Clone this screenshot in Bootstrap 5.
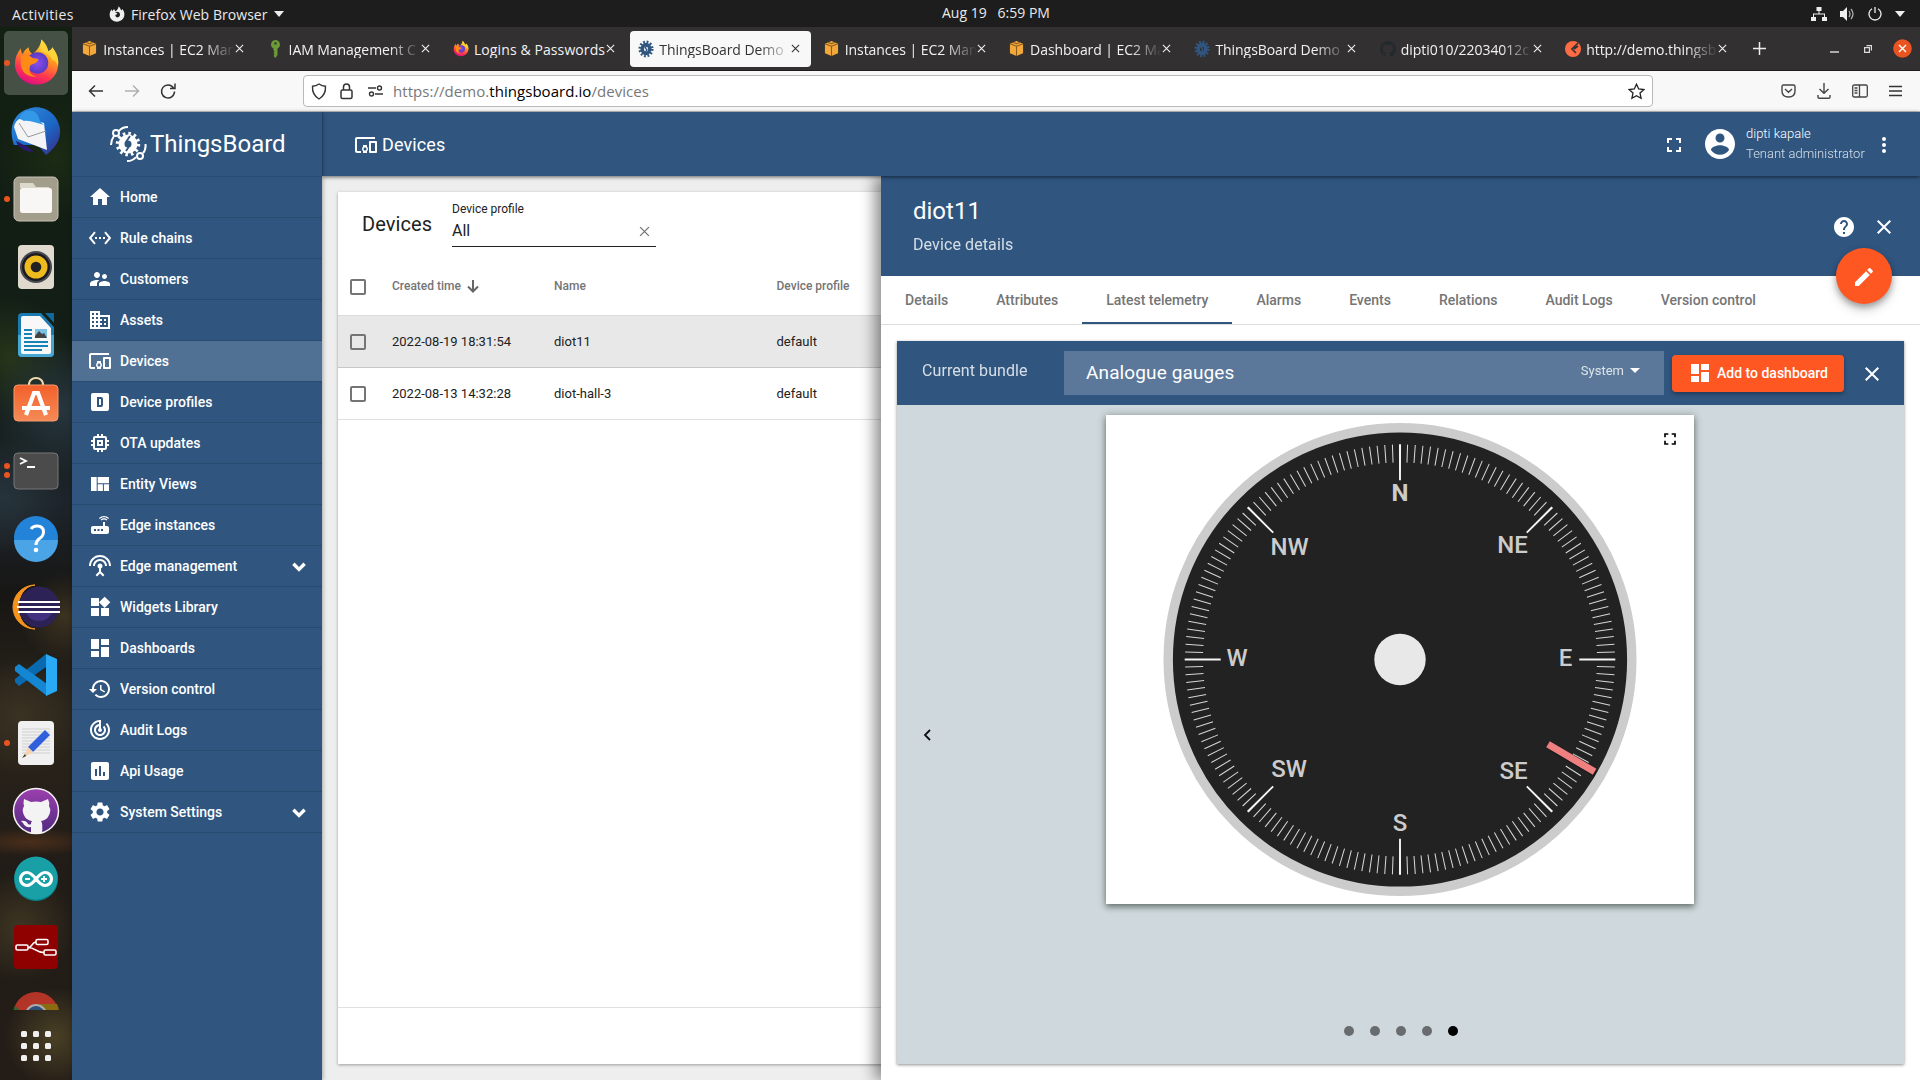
<!DOCTYPE html>
<html lang="en">
<head>
<meta charset="utf-8">
<title>ThingsBoard Demo | Devices</title>
<link rel="stylesheet" href="https://cdn.jsdelivr.net/npm/bootstrap@5.3.0/dist/css/bootstrap.min.css">
<style>
body{width:1920px;height:1080px;overflow:hidden;font-family:Roboto,"Liberation Sans",sans-serif;color:#212121;line-height:1.2}
svg{display:block;flex:none}
.ic{width:24px;height:24px;fill:currentColor}
.ubu{font-family:"Open Sans","Noto Sans",sans-serif;font-size:14px}
.topbar{height:27px;background:#1d1d1d;color:#e9e9e9;padding:0 15px 0 12px}
.topbar>div{flex:1 1 0}
.dock{width:72px;padding-top:2px;background:
 radial-gradient(circle at 60px 380px,#2c3c49cc,transparent 70px),
 radial-gradient(circle at 10px 330px,#26351a,transparent 60px),
 radial-gradient(circle at 55px 130px,#1b2b14,transparent 60px),
 radial-gradient(circle at 5px 470px,#26333b,transparent 60px),
 radial-gradient(circle at 65px 590px,#3c3220,transparent 45px),
 radial-gradient(circle at 20px 690px,#3a3222,transparent 60px),
 radial-gradient(ellipse 70px 14px at 30px 815px,#4a2e1a,transparent),
 radial-gradient(circle at 20px 900px,#3e3622,transparent 55px),
 radial-gradient(circle at 55px 1010px,#4a4025,transparent 50px),
 linear-gradient(#122012,#131d17 35%,#1d242a 45%,#171614 54%,#2a241b 65%,#211c17 80%,#241d17)}
.dock-list{height:981px;overflow:hidden}
.tabstrip{height:44px;background:#333031;border-bottom:1px solid #1e1c1d;color:#f2f2f2}
.btab{width:181px;height:36px;margin:0 2.2px;padding:0 11px 0 8px;border-radius:4px}
.btab.on{background:#f8f8f8;color:#333}
.btab span{flex:1;overflow:hidden;white-space:nowrap;padding-top:3px;letter-spacing:-.06px;-webkit-mask:linear-gradient(90deg,#000 76%,transparent)}
.btab span.full{-webkit-mask:none;letter-spacing:.1px}
.urlrow{height:41px;background:#f8f8f8;border-bottom:1px solid #c4c4c4;color:#444}
.urlbox{width:1350px;height:32px;background:#fff;border:1px solid #b9b9b9;border-radius:4px;color:#777;margin-left:125px;padding:0 7px}
.urltext{margin-left:10px;font-size:15px;letter-spacing:.05px}
.blue{background:#305680}
.side{width:250px;color:#fff;z-index:4;box-shadow:1px 0 4px rgba(0,0,0,.3)}
.brand{height:65px;border-bottom:1px solid #2a4c72;padding:0 0 0 37px;font-size:24px}
.side a{height:41px;border-bottom:1px solid #294b70;padding:0 14px 0 16px;gap:8px;color:#fff;text-decoration:none;font-size:14px;font-weight:500}
.side a.on{background:#507194}
.apphead{height:64px;color:#fff;padding:2px 24px 0 31px;box-shadow:0 1px 4px rgba(0,0,0,.6);z-index:3;border-left:1px solid #2b4e75}
.content{width:559px;background:#eee;padding:16px;overflow:hidden}
.listcard{width:900px;height:872px;background:#fff;box-shadow:0 1px 3px rgba(0,0,0,.35)}
.field{width:204px;height:55px;border-bottom:1px solid #212121;margin-left:20px}
.cb{width:16px;height:16px;border:2px solid #757575;border-radius:2px;margin:0 26px 0 12px}
.trow{height:52px;border-bottom:1px solid #e0e0e0;font-size:13px}
.trow .c1{width:162px}.trow .c2{width:222.5px}
.thead-row{height:58px;border-bottom-color:#dcdcdc;font-size:12px;font-weight:500;color:#757575}
.drawer{width:1039px;background:#fff;box-shadow:-6px 0 14px rgba(0,0,0,.45);z-index:2}
.dhead{height:100px;color:#fff;padding:0 24px 0 32px}
.fab{right:28px;top:72px;width:56px;height:56px;border-radius:50%;background:#ff5722;box-shadow:0 3px 6px rgba(0,0,0,.3),0 6px 12px rgba(0,0,0,.16);z-index:2}
.dtabs{height:49px;border-bottom:1px solid #ddd;font-size:14px;font-weight:500;color:#757575}
.dtabs div{padding:16px 24px 0;height:48px}
.dtabs .on{border-bottom:2px solid #305680}
.wpanel{margin:16px;height:723px;background:#cfd8dc;box-shadow:0 1px 3px rgba(0,0,0,.45)}
.whead{height:64px;color:#fff;padding-left:25px}
.wsel{width:600px;height:44px;background:#5b789a;padding:0 24px 0 22px;margin-left:37px}
.addbtn{width:172px;height:37px;background:#ff5722;border-radius:4px;margin-left:8px;padding-left:16px;gap:5px;font-size:14px;font-weight:500;box-shadow:0 2px 4px rgba(0,0,0,.35)}
.wcard{width:588px;height:489px;background:#fff;box-shadow:0 3px 6px rgba(40,55,50,.55),0 0 8px rgba(60,80,70,.3);margin:10px 0 0 209px}
.wexp{right:14px;top:14px}
.dotrow i{width:10px;height:10px;border-radius:50%;background:#686c6e}
.soft{opacity:.8}
</style>
<script src="https://cdn.jsdelivr.net/npm/bootstrap@5.3.0/dist/js/bootstrap.bundle.min.js"></script>
</head>
<body class="d-flex flex-column">
<svg width="0" height="0" class="position-absolute">
<defs>
<linearGradient id="gFox" x1=".8" y1="0" x2=".4" y2="1"><stop offset="0" stop-color="#fff44f"/><stop offset=".4" stop-color="#ff9a1f"/><stop offset=".75" stop-color="#ff3750"/><stop offset="1" stop-color="#e0107f"/></linearGradient>
<radialGradient id="gGlobe"><stop offset="0" stop-color="#8a4df0"/><stop offset="1" stop-color="#5a3ac2"/></radialGradient>
<linearGradient id="gBird" x1="0" y1="0" x2="1" y2="1"><stop offset="0" stop-color="#2f8fe0"/><stop offset=".6" stop-color="#1c65c4"/><stop offset="1" stop-color="#3b2a86"/></linearGradient>
<linearGradient id="gOr" x1="0" y1="0" x2="0" y2="1"><stop offset="0" stop-color="#f3602b"/><stop offset="1" stop-color="#f58a56"/></linearGradient>
<linearGradient id="gPur" x1="0" y1="0" x2="0" y2="1"><stop offset="0" stop-color="#9d3fae"/><stop offset="1" stop-color="#4f2a80"/></linearGradient>
<symbol id="home" viewBox="0 0 24 24"><path d="M10 20v-6h4v6h5v-8h3L12 3 2 12h3v8z"/></symbol>
<symbol id="chains" viewBox="0 0 24 24"><path d="M7.77 6.76L6.23 5.48.82 12l5.41 6.52 1.54-1.28L3.42 12l4.35-5.24zM7 13h2v-2H7v2zm10-2h-2v2h2v-2zm-6 2h2v-2h-2v2zm6.77-7.52l-1.54 1.28L20.58 12l-4.35 5.24 1.54 1.28L23.18 12l-5.41-6.52z"/></symbol>
<symbol id="people" viewBox="0 0 24 24"><path d="M16.5 12c1.38 0 2.49-1.12 2.49-2.5S17.88 7 16.5 7C15.12 7 14 8.12 14 9.5s1.12 2.5 2.5 2.5zM9 11c1.66 0 2.99-1.34 2.99-3S10.66 5 9 5C7.34 5 6 6.34 6 8s1.34 3 3 3zm7.5 3c-1.83 0-5.5.92-5.5 2.75V19h11v-2.25c0-1.83-3.67-2.75-5.5-2.75zM9 13c-2.33 0-7 1.17-7 3.5V19h7v-2.25c0-.85.33-2.34 2.37-3.47C10.5 13.1 9.66 13 9 13z"/></symbol>
<symbol id="domain" viewBox="0 0 24 24"><path d="M12 7V3H2v18h20V7H12zM6 19H4v-2h2v2zm0-4H4v-2h2v2zm0-4H4V9h2v2zm0-4H4V5h2v2zm4 12H8v-2h2v2zm0-4H8v-2h2v2zm0-4H8V9h2v2zm0-4H8V5h2v2zm10 12h-8v-2h2v-2h-2v-2h2v-2h-2V9h8v10zm-2-8h-2v2h2v-2zm0 4h-2v2h2v-2z"/></symbol>
<symbol id="devices" viewBox="0 0 24 24"><path d="M3 6h18V4H3c-1.1 0-2 .9-2 2v12c0 1.1.9 2 2 2h4v-2H3V6zm10 6H9v1.78c-.61.55-1 1.33-1 2.22s.39 1.67 1 2.22V20h4v-1.78c.61-.55 1-1.34 1-2.22s-.39-1.67-1-2.22V12zm-2 5.5c-.83 0-1.5-.67-1.5-1.5s.67-1.5 1.5-1.5 1.5.67 1.5 1.5-.67 1.5-1.5 1.5zM22 8h-6c-.5 0-1 .5-1 1v10c0 .5.5 1 1 1h6c.5 0 1-.5 1-1V9c0-.5-.5-1-1-1zm-1 10h-4v-8h4v8z"/></symbol>
<symbol id="dbox" viewBox="0 0 24 24"><path fill-rule="evenodd" d="M9 7h4a2 2 0 012 2v6a2 2 0 01-2 2H9V7m2 2v6h2V9h-2M5 3h14a2 2 0 012 2v14a2 2 0 01-2 2H5a2 2 0 01-2-2V5a2 2 0 012-2z"/></symbol>
<symbol id="chip" viewBox="0 0 24 24"><path d="M15 9H9v6h6V9zm-2 4h-2v-2h2v2zm8-2V9h-2V7c0-1.1-.9-2-2-2h-2V3h-2v2h-2V3H9v2H7c-1.1 0-2 .9-2 2v2H3v2h2v2H3v2h2v2c0 1.1.9 2 2 2h2v2h2v-2h2v2h2v-2h2c1.1 0 2-.9 2-2v-2h2v-2h-2v-2h2zm-4 6H7V7h10v10z"/></symbol>
<symbol id="quilt" viewBox="0 0 24 24"><path d="M3 5h5.7v14H3zM9.7 5H21v6.2H9.7zM9.7 12.2h5.2V19H9.7zM15.9 12.2H21V19h-5.1z"/></symbol>
<symbol id="router" viewBox="0 0 24 24"><path d="M20.2 5.9l.8-.8C19.6 3.7 17.8 3 16 3s-3.6.7-5 2.1l.8.8C13 4.8 14.5 4.2 16 4.2s3 .6 4.2 1.7zm-.9.8c-.9-.9-2.1-1.4-3.3-1.4s-2.4.5-3.3 1.4l.8.8c.7-.7 1.6-1 2.5-1 .9 0 1.8.3 2.5 1l.8-.8zM19 13h-2V9h-2v4H5c-1.1 0-2 .9-2 2v4c0 1.1.9 2 2 2h14c1.1 0 2-.9 2-2v-4c0-1.1-.9-2-2-2zM8 18H6v-2h2v2zm3.5 0h-2v-2h2v2zm3.5 0h-2v-2h2v2z"/></symbol>
<symbol id="antenna" viewBox="0 0 24 24"><path d="M12 5c-3.87 0-7 3.13-7 7h2c0-2.76 2.24-5 5-5s5 2.24 5 5h2c0-3.87-3.13-7-7-7zm1 9.29c.88-.39 1.5-1.26 1.5-2.29 0-1.38-1.12-2.5-2.5-2.5S9.5 10.62 9.5 12c0 1.02.62 1.9 1.5 2.29v3.3L7.59 21 9 22.41l3-3 3 3L16.41 21 13 17.59v-3.3zM12 1C5.93 1 1 5.93 1 12h2c0-4.97 4.03-9 9-9s9 4.03 9 9h2c0-6.07-4.93-11-11-11z"/></symbol>
<symbol id="widgets" viewBox="0 0 24 24"><path d="M13 13v8h8v-8h-8zM3 21h8v-8H3v8zM3 3v8h8V3H3zm13.66-1.31L11 7.34 16.66 13l5.66-5.66-5.66-5.65z"/></symbol>
<symbol id="dash" viewBox="0 0 24 24"><path d="M3 13h8V3H3v10zm0 8h8v-6H3v6zm10 0h8V11h-8v10zm0-18v6h8V3h-8z"/></symbol>
<symbol id="hist" viewBox="0 0 24 24"><path d="M13 3c-4.97 0-9 4.03-9 9H1l3.89 3.89.07.14L9 12H6c0-3.87 3.13-7 7-7s7 3.13 7 7-3.13 7-7 7c-1.93 0-3.68-.79-4.94-2.06l-1.42 1.42C8.27 19.99 10.51 21 13 21c4.97 0 9-4.03 9-9s-4.03-9-9-9zm-1 5v5l4.28 2.54.72-1.21-3.5-2.08V8H12z"/></symbol>
<symbol id="track" viewBox="0 0 24 24"><path d="M19.07 4.93l-1.41 1.41C19.1 7.79 20 9.79 20 12c0 4.42-3.58 8-8 8s-8-3.58-8-8c0-4.08 3.05-7.44 7-7.93v2.02C8.16 6.57 6 9.03 6 12c0 3.31 2.69 6 6 6s6-2.69 6-6c0-1.66-.67-3.16-1.76-4.24l-1.41 1.41C15.55 9.9 16 10.9 16 12c0 2.21-1.79 4-4 4s-4-1.79-4-4c0-1.86 1.28-3.41 3-3.86v2.14c-.6.35-1 .98-1 1.72 0 1.1.9 2 2 2s2-.9 2-2c0-.74-.4-1.38-1-1.72V2h-1C6.48 2 2 6.48 2 12s4.48 10 10 10 10-4.48 10-10c0-2.76-1.12-5.26-2.93-7.07z"/></symbol>
<symbol id="chart" viewBox="0 0 24 24"><path d="M19 3H5c-1.1 0-2 .9-2 2v14c0 1.1.9 2 2 2h14c1.1 0 2-.9 2-2V5c0-1.1-.9-2-2-2zM9 17H7v-7h2v7zm4 0h-2V7h2v10zm4 0h-2v-4h2v4z"/></symbol>
<symbol id="cog" viewBox="0 0 24 24"><path d="M19.14 12.94c.04-.3.06-.61.06-.94 0-.32-.02-.64-.07-.94l2.03-1.58c.18-.14.23-.41.12-.61l-1.92-3.32c-.12-.22-.37-.29-.59-.22l-2.39.96c-.5-.38-1.03-.7-1.62-.94l-.36-2.54c-.04-.24-.24-.41-.48-.41h-3.84c-.24 0-.43.17-.47.41l-.36 2.54c-.59.24-1.13.57-1.62.94l-2.39-.96c-.22-.08-.47 0-.59.22L2.74 8.87c-.12.21-.08.47.12.61l2.03 1.58c-.05.3-.09.63-.09.94s.02.64.07.94l-2.03 1.58c-.18.14-.23.41-.12.61l1.92 3.32c.12.22.37.29.59.22l2.39-.96c.5.38 1.03.7 1.62.94l.36 2.54c.05.24.24.41.48.41h3.84c.24 0 .44-.17.47-.41l.36-2.54c.59-.24 1.13-.56 1.62-.94l2.39.96c.22.08.47 0 .59-.22l1.92-3.32c.12-.22.07-.47-.12-.61l-2.01-1.58zM12 15.6c-1.98 0-3.6-1.62-3.6-3.6s1.62-3.6 3.6-3.6 3.6 1.62 3.6 3.6-1.62 3.6-3.6 3.6z"/></symbol>
<symbol id="full" viewBox="0 0 24 24"><path d="M7 14H5v5h5v-2H7v-3zm-2-4h2V7h3V5H5v5zm12 7h-3v2h5v-5h-2v3zM14 5v2h3v3h2V5h-5z"/></symbol>
<symbol id="close" viewBox="0 0 24 24"><path d="M19 6.41L17.59 5 12 10.59 6.41 5 5 6.41 10.59 12 5 17.59 6.41 19 12 13.41 17.59 19 19 17.59 13.41 12z"/></symbol>
<symbol id="down" viewBox="0 0 16 16"><path d="M3 6L8 11 13 6" fill="none" stroke="currentColor" stroke-width="3"/></symbol>
<symbol id="x" viewBox="0 0 10 10"><path d="M1 1l8 8M9 1L1 9" fill="none" stroke="currentColor" stroke-width="1.2"/></symbol>
<symbol id="cube" viewBox="0 0 16 18"><path d="M1 4l7-3 7 3v10l-7 3-7-3z" fill="#f2a73b"/><path d="M1 4l7 2.5L15 4M8 6.5V17M4.5 2.5L8 4l3.5-1.5" stroke="#8a5a17" stroke-width="1.1" fill="none"/></symbol>
<symbol id="gear" viewBox="0 0 18 20"><ellipse cx="9" cy="10" rx="4.3" ry="5" fill="none" stroke="currentColor" stroke-width="4"/><ellipse cx="9" cy="10" rx="7" ry="8" fill="none" stroke="currentColor" stroke-width="3" stroke-dasharray="2 1.95"/><path d="M10.5 6L8 8.5l2 2.5-2 3" stroke="currentColor" fill="none" stroke-width="1.5"/></symbol>
<symbol id="fox" viewBox="0 0 48 48"><path d="M29 1c5 5 6 8 7 12 3-1 4-3 4-4 5 6 7 12 6 19-1 11-10 19-22 19S2 38 2 26c0-6 2-11 6-16 0 3 1 5 2 6 1-3 3-5 6-7 0 3 1 5 4 7 4-3 8-8 9-15z" fill="url(#gFox)"/><circle cx="25" cy="25" r="11" fill="url(#gGlobe)"/><path d="M8 18c4-2 9-1 12 2l6 1c-1 4-4 5-8 6-3 6 0 11 7 12-10 1-17-5-17-13z" fill="#ff8a16"/><path d="M29 1c5 5 6 8 7 12 3-1 4-3 4-4 5 6 7 12 6 19-2-4-4-6-6-6-1-4-6-8-12-9z" fill="#ffd83b" opacity=".8"/></symbol>
<symbol id="cat" viewBox="0 0 16 16"><path d="M8 0C3.58 0 0 3.58 0 8c0 3.54 2.29 6.53 5.47 7.59.4.07.55-.17.55-.38 0-.19-.01-.82-.01-1.49-2.01.37-2.53-.49-2.69-.94-.09-.23-.48-.94-.82-1.13-.28-.15-.68-.52-.01-.53.63-.01 1.08.58 1.23.82.72 1.21 1.87.87 2.33.66.07-.52.28-.87.51-1.07-1.78-.2-3.64-.89-3.64-3.95 0-.87.31-1.59.82-2.15-.08-.2-.36-1.02.08-2.12 0 0 .67-.21 2.2.82.64-.18 1.32-.27 2-.27s1.36.09 2 .27c1.53-1.04 2.2-.82 2.2-.82.44 1.1.16 1.92.08 2.12.51.56.82 1.27.82 2.15 0 3.07-1.87 3.75-3.65 3.95.29.25.54.73.54 1.48 0 1.07-.01 1.93-.01 2.2 0 .21.15.46.55.38A8.01 8.01 0 0016 8c0-4.42-3.58-8-8-8z"/></symbol>
</defs>
</svg>

<header class="topbar ubu d-flex align-items-center">
  <div class="d-flex align-items-center pt-1">
    <span style="letter-spacing:.42px">Activities</span>
    <svg width="16" height="18" viewBox="0 0 48 48" style="margin:-3px 0 0 35px" fill="#eee"><path fill-rule="evenodd" d="M29 1c5 5 6 8 7 12 3-1 4-3 4-4 5 6 7 12 6 19-1 11-10 19-22 19S2 38 2 26c0-6 2-11 6-16 0 3 1 5 2 6 1-3 3-5 6-7 0 3 1 5 4 7 4-3 8-8 9-15zM18 19l7 3c-1 4-4 4-6 5 0 5 4 8 8 7 7-2 8-10 3-15-4-3-9-2-12 0z"/></svg>
    <span style="margin-left:6px;letter-spacing:.05px">Firefox Web Browser</span>
    <svg width="10" height="6" viewBox="0 0 10 6" style="margin:-2px 0 0 6px" fill="#eee"><path d="M0 0h10L5 6z"/></svg>
  </div>
  <div class="text-center" style="padding-left:75px;white-space:pre">Aug 19   6:59 PM</div>
  <div class="d-flex align-items-center justify-content-end" style="gap:13px">
    <svg width="16" height="14" viewBox="0 0 16 14" fill="#eee"><path d="M5.5 0h5v4h-2v2.5H14V10h2v4h-5v-4h2V7.5H3V10h2v4H0v-4h2V6.5h5.500V4h-2z"/></svg>
    <svg width="15" height="14" viewBox="0 0 15 14" fill="#eee"><path d="M0 4h3l4-4v14L3 10H0z"/><path d="M9 4q2 3 0 6M11 2q4 5 0 10" fill="none" stroke="#aaa" stroke-width="1.300"/></svg>
    <svg width="14" height="14" viewBox="0 0 14 14" fill="none" stroke="#eee" stroke-width="1.300"><path d="M7 0v6M4 1.800a6 6 0 106 0"/></svg>
    <svg width="10" height="6" viewBox="0 0 10 6" fill="#eee"><path d="M0 0h10L5 6z"/></svg>
  </div>
</header>

<div class="d-flex flex-fill">
<nav class="dock d-flex flex-column">
  <div class="dock-list">
    <svg width="72" height="68" viewBox="0 0 72 68"><rect x="4" y="2" width="64" height="64" rx="5" fill="#fff" opacity=".22"/><circle cx="7" cy="34" r="3" fill="#e95420"/><use href="#fox" x="13" y="9" width="47" height="48"/></svg>
    <svg width="72" height="68" viewBox="0 0 72 68"><path d="M14 48C8 30 14 16 28 12c14-6 30 4 32 20 1 12-6 20-14 26l-8-10z" fill="url(#gBird)"/><path d="M14 30c2-8 6-9 12-9l18 5 3 27-29-11z" fill="#f4f4f6"/><path d="M19 26l9 14 18-6" fill="none" stroke="#999" stroke-width="1"/><path d="M16 44l12 6 6 5c-9 0-16-4-18-11z" fill="#2a1a6b"/><path d="M20 22c0-8 10-11 16-6 4 4 2 8 8 12-8-2-14-5-20-4z" fill="#3498e8"/></svg>
    <svg width="72" height="68" viewBox="0 0 72 68"><circle cx="7" cy="34" r="3" fill="#e95420"/><rect x="14" y="12" width="44" height="44" rx="5" fill="#a39d8c" stroke="#c9c3b4"/><path d="M20 23v-5h13l3 4h13v4z" fill="#dcd8cc"/><rect x="20" y="23" width="32" height="25" rx="2.500" fill="#f8f7f5"/></svg>
    <svg width="72" height="68" viewBox="0 0 72 68"><rect x="18" y="12" width="36" height="44" rx="4" fill="#e0dace"/><circle cx="36" cy="34" r="16" fill="#4a4a52"/><circle cx="36" cy="34" r="14" fill="#1c1b22"/><circle cx="36" cy="34" r="11.500" fill="#eebb1e"/><circle cx="36" cy="34" r="5.300" fill="#222"/></svg>
    <svg width="72" height="68" viewBox="0 0 72 68"><path d="M22 12h19l13 14v26a4 4 0 01-4 4H22a4 4 0 01-4-4V16a4 4 0 014-4z" fill="#1b7bb0"/><path d="M18 34h36v18a4 4 0 01-4 4H22a4 4 0 01-4-4z" fill="#48a6d4"/><path d="M45 12h9v10z" fill="#1168a0"/><path d="M21 17q0-2 2-2h17l11 12v24q0 2-2 2H23q-2 0-2-2z" fill="#f8f8f8"/><path d="M24 29h8M24 33h8M24 37h8M24 41h24M24 45h24M24 49h18" stroke="#1b82b8" stroke-width="2"/><path d="M35 28h12v9H35z" fill="#7cc0e4"/><path d="M35 37v-2l4-5 3 3 2-1 3 5z" fill="#444"/></svg>
    <svg width="72" height="68" viewBox="0 0 72 68"><path d="M29 17v-2a7 6 0 0114 0v2" fill="none" stroke="#f2dcae" stroke-width="2.200"/><rect x="14" y="16" width="44" height="36" rx="4" fill="url(#gOr)" stroke="#f79a6c"/><path d="M26 46l8-22h4l8 22M22 39h28" stroke="#fff" stroke-width="4.200" fill="none"/></svg>
    <svg width="72" height="68" viewBox="0 0 72 68"><circle cx="7" cy="29" r="3" fill="#e95420"/><circle cx="7" cy="38" r="3" fill="#e95420"/><rect x="14" y="16" width="44" height="36" rx="4" fill="#4b4b4b" stroke="#777"/><path d="M20 21l6 3-6 3M27 30h8" stroke="#fff" stroke-width="1.800" fill="none"/></svg>
    <svg width="72" height="68" viewBox="0 0 72 68"><circle cx="36" cy="33" r="22" fill="#2283d8"/><path d="M14 35h44a22 22 0 01-44 0z" fill="#4aa4e6"/><path d="M31 24q2-3 6-3 6.500 0 6.500 6 0 4-4 6.500-3.500 2.500-3.500 6.500" stroke="#fff" stroke-width="3" fill="none"/><circle cx="36" cy="45" r="2.300" fill="#fff"/></svg>
    <svg width="72" height="68" viewBox="0 0 72 68"><path d="M35 12a22 22 0 000 44c-22-2-22-42 0-44z" fill="#f7941e" stroke="#f7941e"/><circle cx="39" cy="34" r="20.500" fill="#2c2255"/><path d="M26 40h26q-4 8-13 8t-13-8z" fill="#41317f"/><path d="M18 29h42M17 34h43M18 39h42" stroke="#fff" stroke-width="2.200"/></svg>
    <svg width="72" height="68" viewBox="0 0 72 68"><path d="M46 13v13L19 45l-4-4v-3z" fill="#0a6ab0"/><path d="M15 26l4-3 28 20v12L15 30z" fill="#1587d2"/><path d="M46 13l11 5v32l-11 5z" fill="#2aa9f5"/></svg>
    <svg width="72" height="68" viewBox="0 0 72 68"><circle cx="7" cy="34" r="3" fill="#e95420"/><rect x="18" y="12" width="36" height="44" rx="4" fill="#f0f0f0"/><path d="M22 20h28M22 23h28M22 26h28M22 29h28M22 32h28M22 35h28M22 38h28M22 41h28M22 44h28" stroke="#cfcfcf"/><path d="M28 38l17-17 5 5-17 17z" fill="#2f5fdc"/><path d="M28 38l5 5-10 6z" fill="#f6d3ae"/><path d="M25 45l-3 4 4-2z" fill="#333"/></svg>
    <svg width="72" height="68" viewBox="0 0 72 68"><circle cx="36" cy="34" r="22.500" fill="url(#gPur)" stroke="#f4f4f4" stroke-width="1.500"/><path d="M24 22l7 3q5-1 10 0l7-3q2 4 1 7 3 5-1 11-2 3-7 4 2 2 1 12H31v-6q-6 1-8-4l-2-2q5-1 7 3 2 1 3 0 0-2 1-3-5-1-7-4-4-6-1-11-1-3 0-7z" fill="#f3f3f3"/></svg>
    <svg width="72" height="68" viewBox="0 0 72 68"><circle cx="36" cy="34" r="22" fill="#07878c"/><circle cx="36" cy="33" r="21.500" fill="#18a0a6"/><g fill="none" stroke="#fff"><path d="M36 34c-4-5-6-6.500-9-6.500a6.500 6.500 0 000 13c3 0 5-1.500 9-6.500s6-6.500 9-6.500a6.500 6.500 0 010 13c-3 0-5-1.500-9-6.500z" stroke-width="3.200"/><path d="M25 34h5M41 34h6M44 31v6" stroke-width="1.800"/></g></svg>
    <svg width="72" height="68" viewBox="0 0 72 68"><rect x="14" y="12" width="44" height="44" rx="4" fill="#8f0000"/><g fill="none" stroke="#fff" stroke-width="1.600"><rect x="16" y="32" width="12" height="5" rx="1.500"/><rect x="36" y="26.500" width="12" height="5" rx="1.500"/><rect x="44" y="37" width="12" height="5" rx="1.500"/><path d="M28 34.500c5 0 3-5 8-5.500M28 34.500c8 0 7 5 16 5"/></g></svg>
    <svg width="72" height="68" viewBox="0 0 72 68"><g opacity=".8"><path d="M13 34a23 23 0 0146 0z" fill="#d53a2c"/><path d="M13 34q0-5 2-9l10 9z" fill="#2f7a35"/><path d="M40 23h17q2 4 2 9H40z" fill="#a07c10"/><circle cx="36" cy="34" r="11" fill="#ccc"/><circle cx="36" cy="34" r="9" fill="#2d5a90"/></g></svg>
  </div>
  <svg width="72" height="70" viewBox="0 0 72 70" fill="#f0f0f0"><g id="r3"><rect x="21" y="21" width="6" height="6" rx="1.500"/><rect x="33" y="21" width="6" height="6" rx="1.500"/><rect x="45" y="21" width="6" height="6" rx="1.500"/></g><use href="#r3" y="12"/><use href="#r3" y="24"/></svg>
</nav>

<main class="d-flex flex-column flex-fill">
  <div class="tabstrip ubu d-flex align-items-center">
    <div class="btab d-flex align-items-center"><svg width="15" height="17"><use href="#cube"/></svg><span style="margin-left:6px">Instances | EC2 Man</span><svg width="9" height="9"><use href="#x"/></svg></div>
    <div class="btab d-flex align-items-center"><svg width="15" height="18" viewBox="0 0 15 18"><path d="M7.500 0a4.500 4.500 0 012 8.500V15l-2 3-2-2 1-1.500-1-1.500 1-1.500-1-1V8.500a4.500 4.500 0 012-8.500zm0 2.200a1.200 1.200 0 100 2.400 1.200 1.200 0 000-2.400z" fill="#6b9a37"/></svg><span style="margin-left:6px">IAM Management C</span><svg width="9" height="9"><use href="#x"/></svg></div>
    <div class="btab d-flex align-items-center"><svg width="16" height="17"><use href="#fox"/></svg><span class="full" style="margin-left:5px">Logins &amp; Passwords</span><svg width="9" height="9"><use href="#x"/></svg></div>
    <div class="btab on d-flex align-items-center"><svg width="16" height="18" color="#305680"><use href="#gear"/></svg><span style="margin-left:5px">ThingsBoard Demo</span><svg width="9" height="9"><use href="#x"/></svg></div>
    <div class="btab d-flex align-items-center"><svg width="15" height="17"><use href="#cube"/></svg><span style="margin-left:6px">Instances | EC2 Man</span><svg width="9" height="9"><use href="#x"/></svg></div>
    <div class="btab d-flex align-items-center"><svg width="15" height="17"><use href="#cube"/></svg><span style="margin-left:6px">Dashboard | EC2 Ma</span><svg width="9" height="9"><use href="#x"/></svg></div>
    <div class="btab d-flex align-items-center"><svg width="16" height="18" color="#305680"><use href="#gear"/></svg><span style="margin-left:5px">ThingsBoard Demo</span><svg width="9" height="9"><use href="#x"/></svg></div>
    <div class="btab d-flex align-items-center"><svg width="16" height="16" fill="#24292e"><use href="#cat"/></svg><span style="margin-left:5px">dipti010/22034012c</span><svg width="9" height="9"><use href="#x"/></svg></div>
    <div class="btab d-flex align-items-center"><svg width="16" height="16" viewBox="0 0 16 16"><circle cx="8" cy="8" r="8" fill="#ff6c44"/><path d="M13 2L7 8l4 4M9 8l4-3" stroke="#333031" stroke-width="1.600" fill="none"/></svg><span style="margin-left:5px">http://demo.thingsb</span><svg width="9" height="9"><use href="#x"/></svg></div>
    <svg width="13" height="13" viewBox="0 0 13 13" stroke="#eee" stroke-width="1.500" style="margin-left:13px"><path d="M0 6.500h13M6.500 0v13"/></svg>
    <div class="ms-auto d-flex align-items-center" style="gap:21px;padding-right:8px">
      <svg width="9" height="9" viewBox="0 0 9 9" stroke="#eee" stroke-width="1.300" style="margin-right:4px"><path d="M0 8h9"/></svg>
      <svg width="8" height="8" viewBox="0 0 8 8" stroke="#ddd" stroke-width="1.200" fill="none"><path d="M.6 2.600h4.800v4.800H.6zM2.500.6h4.900v5"/></svg>
      <svg width="19" height="19" viewBox="0 0 19 19"><circle cx="9.500" cy="9.500" r="9.300" fill="#e95420"/><path d="M6 6l7 7M13 6l-7 7" stroke="#fff" stroke-width="1.400"/></svg>
    </div>
  </div>
  <div class="urlrow ubu d-flex align-items-center">
    <svg width="96" height="18" viewBox="0 0 96 18" fill="none" stroke="#333" stroke-width="1.500" style="margin-left:10px"><path d="M21 9H7.500M13 3.500L7.500 9l5.500 5.500"/><path d="M43 9h13.500M51 3.500L56.500 9 51 14.500" stroke="#b0b0b0"/><path d="M91.500 6a6.500 6.500 0 101 3.500M93 1.500v5h-5"/></svg>
    <div class="urlbox d-flex align-items-center">
      <svg width="16" height="17" viewBox="0 0 16 17" fill="none" stroke="#333" stroke-width="1.400"><path d="M8 1q3 2 6.500 2.300Q15 12 8 16 1 12 1.500 3.300 5 3 8 1z"/></svg>
      <svg width="13" height="17" viewBox="0 0 13 17" fill="none" stroke="#333" stroke-width="1.500" style="margin-left:13px"><rect x="1" y="7" width="11" height="8.500" rx="1.500"/><path d="M3.500 7V4a3 3 0 016 0v3"/></svg>
      <svg width="15" height="12" viewBox="0 0 15 12" fill="none" stroke="#333" stroke-width="1.400" style="margin-left:15px"><path d="M0 3h8M7 9h8"/><circle cx="11.500" cy="3" r="2"/><circle cx="3.500" cy="9" r="2"/></svg>
      <span class="urltext">https://demo.<span class="text-black">thingsboard.io</span>/devices</span>
      <svg width="17" height="17" viewBox="0 0 17 17" fill="none" stroke="#222" stroke-width="1.300" class="ms-auto"><path d="M8.500 1.200l2.200 4.800 5.200.6-3.900 3.500 1.100 5.200-4.600-2.600-4.600 2.600L5 10.100 1.100 6.600 6.300 6z"/></svg>
    </div>
    <div class="ms-auto d-flex align-items-center" style="gap:21px;padding-right:18px">
      <svg width="15" height="14" viewBox="0 0 15 14" fill="none" stroke="#444" stroke-width="1.400"><path d="M1 2.500Q1 1 2.500 1h10Q14 1 14 2.500V7q0 6-6.500 6T1 7zM4 5l3.500 3.300L11 5"/></svg>
      <svg width="14" height="16" viewBox="0 0 14 16" fill="none" stroke="#444" stroke-width="1.400"><path d="M7 0v10M2.500 6L7 10.300 11.500 6M1 12v2q0 1.200 1.200 1.200h9.600Q13 15.200 13 14v-2"/></svg>
      <svg width="16" height="14" viewBox="0 0 16 14" fill="none" stroke="#444" stroke-width="1.300"><rect x=".7" y="1" width="14.600" height="12" rx="1.500"/><path d="M7.500 1v12M2.500 4h3M2.500 6.500h3M2.500 9h3"/></svg>
      <svg width="13" height="12" viewBox="0 0 13 12" stroke="#333" stroke-width="1.300"><path d="M0 1.500h13M0 6h13M0 10.500h13"/></svg>
    </div>
  </div>

  <div class="d-flex flex-fill">
    <aside class="side blue">
      <div class="brand d-flex align-items-center">
        <svg width="38" height="38" viewBox="0 0 38 38" fill="none" stroke="#fff" stroke-width="2" style="margin-top:-1px"><circle cx="7" cy="8" r="3"/><path d="M10 6q3-4 9-4M5 11q-3 4-3 9M27 32q-3 4-9 4M34 28q3-3 2.500-9"/><circle cx="31" cy="31" r="3"/><circle cx="19" cy="19" r="6.500" stroke-width="6"/><circle cx="19" cy="19" r="10.500" stroke-width="3.500" stroke-dasharray="2.500 3"/><path d="M21 11l-4 6 4 3-4 6" stroke="#305680" stroke-width="1.800"/></svg>
        <span style="margin-left:3px">ThingsBoard</span>
      </div>
      <a class="d-flex align-items-center"><svg class="ic"><use href="#home"/></svg>Home</a>
      <a class="d-flex align-items-center"><svg class="ic"><use href="#chains"/></svg>Rule chains</a>
      <a class="d-flex align-items-center"><svg class="ic"><use href="#people"/></svg>Customers</a>
      <a class="d-flex align-items-center"><svg class="ic"><use href="#domain"/></svg>Assets</a>
      <a class="on d-flex align-items-center"><svg class="ic"><use href="#devices"/></svg>Devices</a>
      <a class="d-flex align-items-center"><svg class="ic"><use href="#dbox"/></svg>Device profiles</a>
      <a class="d-flex align-items-center"><svg class="ic"><use href="#chip"/></svg>OTA updates</a>
      <a class="d-flex align-items-center"><svg class="ic"><use href="#quilt"/></svg>Entity Views</a>
      <a class="d-flex align-items-center"><svg class="ic"><use href="#router"/></svg>Edge instances</a>
      <a class="d-flex align-items-center"><svg class="ic"><use href="#antenna"/></svg>Edge management<svg class="ms-auto" width="18" height="18"><use href="#down"/></svg></a>
      <a class="d-flex align-items-center"><svg class="ic"><use href="#widgets"/></svg>Widgets Library</a>
      <a class="d-flex align-items-center"><svg class="ic"><use href="#dash"/></svg>Dashboards</a>
      <a class="d-flex align-items-center"><svg class="ic"><use href="#hist"/></svg>Version control</a>
      <a class="d-flex align-items-center"><svg class="ic"><use href="#track"/></svg>Audit Logs</a>
      <a class="d-flex align-items-center"><svg class="ic"><use href="#chart"/></svg>Api Usage</a>
      <a class="d-flex align-items-center"><svg class="ic"><use href="#cog"/></svg>System Settings<svg class="ms-auto" width="18" height="18"><use href="#down"/></svg></a>
    </aside>

    <section class="d-flex flex-column flex-fill">
      <div class="apphead blue d-flex align-items-center position-relative">
        <svg class="ic"><use href="#devices"/></svg><span style="font-size:18px;margin-left:4px;letter-spacing:.1px">Devices</span>
        <svg class="ic ms-auto"><use href="#full"/></svg>
        <svg width="36" height="36" viewBox="0 0 24 24" fill="#fff" style="margin:0 8px 2px 16px"><path d="M12 2C6.480 2 2 6.480 2 12s4.480 10 10 10 10-4.480 10-10S17.520 2 12 2zm0 3c1.660 0 3 1.340 3 3s-1.340 3-3 3-3-1.340-3-3 1.340-3 3-3zm0 14.200c-2.500 0-4.710-1.280-6-3.220.03-1.990 4-3.080 6-3.080 1.990 0 5.970 1.090 6 3.080-1.290 1.940-3.500 3.220-6 3.220z"/></svg>
        <div style="width:126px;font-size:13px;font-weight:300;line-height:20px;padding-bottom:2px"><div>dipti kapale</div><div style="opacity:.8">Tenant administrator</div></div>
        <svg class="ic" viewBox="0 0 24 24"><circle cx="12" cy="6" r="2"/><circle cx="12" cy="12" r="2"/><circle cx="12" cy="18" r="2"/></svg>
      </div>

      <div class="d-flex flex-fill">
        <div class="content">
          <div class="listcard d-flex flex-column">
            <div class="d-flex" style="height:66px;padding-left:24px">
              <span style="font-size:20px;padding-top:20px;width:70px;letter-spacing:.1px">Devices</span>
              <div class="field">
                <div style="font-size:12px;padding-top:10px">Device profile</div>
                <div class="d-flex align-items-center justify-content-between" style="font-size:16px;padding:5px 6px 0 0">All<svg width="11" height="11" color="#757575" style="margin-top:2px"><use href="#x"/></svg></div>
              </div>
            </div>
            <div class="trow thead-row d-flex align-items-center"><div class="cb"></div><div class="c1 d-flex align-items-center">Created time<svg width="12" height="13" viewBox="0 0 12 13" fill="none" stroke="#666" stroke-width="2" style="margin-left:6px"><path d="M6 0v11M1 6.500l5 5 5-5"/></svg></div><div class="c2">Name</div><div>Device profile</div></div>
            <div class="trow d-flex align-items-center" style="background:#e8e8e8;border-color:#c8c8c8"><div class="cb"></div><div class="c1">2022-08-19 18:31:54</div><div class="c2">diot11</div><div>default</div></div>
            <div class="trow d-flex align-items-center"><div class="cb"></div><div class="c1">2022-08-13 14:32:28</div><div class="c2">diot-hall-3</div><div>default</div></div>
            <div class="mt-auto" style="height:57px;border-top:1px solid #e0e0e0"></div>
          </div>
        </div>

        <div class="drawer position-relative">
          <div class="dhead blue d-flex align-items-center">
            <div><div style="font-size:24px;line-height:28px">diot11</div><div class="soft" style="font-size:16px;margin:10px 0 1px;letter-spacing:.1px">Device details</div></div>
            <svg class="ic ms-auto" viewBox="0 0 24 24" style="margin-top:2px"><path d="M12 2C6.480 2 2 6.480 2 12s4.480 10 10 10 10-4.480 10-10S17.520 2 12 2zm1 17h-2v-2h2v2zm2.070-7.750l-.9.920C13.450 12.900 13 13.500 13 15h-2v-.5c0-1.100.45-2.100 1.170-2.830l1.240-1.260c.37-.36.59-.86.59-1.410 0-1.100-.9-2-2-2s-2 .9-2 2H8c0-2.210 1.790-4 4-4s4 1.790 4 4c0 .88-.36 1.680-.93 2.250z"/></svg>
            <svg class="ic" style="margin:2px 0 0 16px"><use href="#close"/></svg>
          </div>
          <div class="fab position-absolute d-flex align-items-center justify-content-center text-white"><svg class="ic" viewBox="0 0 24 24" style="margin-top:2px"><path d="M3 17.250V21h3.750L17.810 9.940l-3.750-3.750L3 17.250zM20.710 7.040c.39-.39.39-1.020 0-1.410l-2.340-2.340c-.39-.39-1.020-.39-1.410 0l-1.830 1.830 3.750 3.750 1.830-1.830z"/></svg></div>
          <div class="dtabs d-flex"><div>Details</div><div>Attributes</div><div class="on">Latest telemetry</div><div>Alarms</div><div>Events</div><div>Relations</div><div>Audit Logs</div><div>Version control</div></div>
          <div class="wpanel d-flex flex-column position-relative">
            <div class="whead blue d-flex align-items-center">
              <span class="soft text-nowrap" style="font-size:16px;width:105px;margin-top:-4px;letter-spacing:.08px">Current bundle</span>
              <div class="wsel d-flex align-items-center"><span style="font-size:19px;letter-spacing:.12px">Analogue gauges</span><span class="ms-auto soft" style="font-size:13px;margin-top:-4px">System</span><svg width="10" height="5" viewBox="0 0 10 5" fill="#fff" style="margin:-5px 0 0 6px"><path d="M0 0h10L5 5z"/></svg></div>
              <div class="addbtn d-flex align-items-center"><svg class="ic"><use href="#dash"/></svg>Add to dashboard</div>
              <svg class="ic" style="margin:2px 0 0 16px"><use href="#close"/></svg>
            </div>
            <div class="wcard position-relative">
              <svg width="588" height="489" viewBox="1106 415 588 489" font-family="Roboto" font-size="24" font-weight="500" text-anchor="middle">
                <circle cx="1400" cy="659.500" r="231.800" fill="#222" stroke="#ccc" stroke-width="9.400"/>
                <g fill="none">
                <circle cx="1400" cy="659.500" r="206" stroke="#d6d6d6" stroke-width="18" pathLength="176" stroke-dasharray=".14 .86" stroke-dashoffset=".07"/>
                <circle cx="1400" cy="659.500" r="197.300" stroke="#f4f4f4" stroke-width="36" pathLength="8" stroke-dasharray=".013 .987" stroke-dashoffset=".0065"/>
                </g>
                <g fill="#ccc"><text x="1400" y="501" font-weight="700">N</text><text x="1512.500" y="553">NE</text><text x="1565.500" y="666">E</text><text x="1513.500" y="779">SE</text><text x="1400" y="831">S</text><text x="1289" y="777">SW</text><text x="1237" y="666">W</text><text x="1289.500" y="555">NW</text></g>
                <circle cx="1400" cy="659.500" r="25.700" fill="#e8e8e8"/>
                <path d="M1551 748l45 26" stroke="#000" stroke-opacity=".2" stroke-width="7"/>
                <path d="M1548 744.300l46.600 27.400" stroke="#f08080" stroke-width="7"/>
              </svg>
              <svg class="wexp position-absolute" width="20" height="20" color="#222"><use href="#full"/></svg>
            </div>
            <svg class="position-absolute" style="left:25px;top:388px" width="10" height="12" viewBox="0 0 10 12" fill="none" stroke="#111" stroke-width="1.800"><path d="M8 1L3 6l5 5"/></svg>
            <div class="dotrow d-flex mt-auto justify-content-center" style="gap:16px;padding-bottom:28px"><i></i><i></i><i></i><i></i><i class="bg-black"></i></div>
          </div>
        </div>
      </div>
    </section>
  </div>
</main>
</div>
</body>
</html>
